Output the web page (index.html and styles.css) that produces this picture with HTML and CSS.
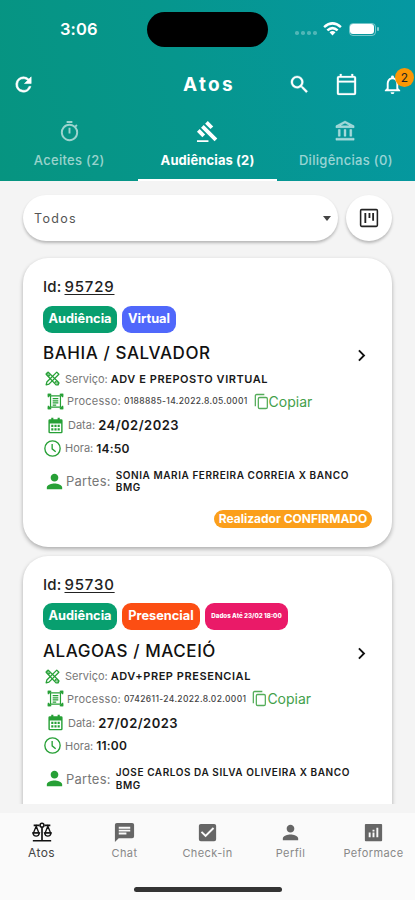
FILE: index.html
```html
<!DOCTYPE html>
<html lang="pt-BR">
<head>
<meta charset="utf-8">
<title>Atos</title>
<link rel="stylesheet" href="styles.css">
</head>
<body>
<svg class="defs" width="0" height="0">
  <symbol id="tools" viewBox="0 0 24 24"><g fill="none" stroke="currentColor" stroke-width="1.8" stroke-linejoin="round"><path d="M3 6l3-3 15 15-1 3-3 0z"/><path d="M18 3l3 3L7 20l-4 1 1-4z"/><path d="M6 9l2-2M15 18l2-2"/></g><path fill="currentColor" d="M2 5l3-3 5 5-3 3zM15 17l3-3 4 5-2 3z" opacity=".55"/></symbol>
  <symbol id="scan" viewBox="0 0 24 24"><g fill="none" stroke="currentColor" stroke-width="1.7"><path d="M2 6V2h4M18 2h4v4M22 18v4h-4M6 22H2v-4M5 4h14v16H5zM8 8h8M8 11h8M8 14h8M8 17h5"/></g><path fill="currentColor" d="M1 1h4v4H1zM19 1h4v4h-4zM1 19h4v4H1zM19 19h4v4h-4z"/></symbol>
  <symbol id="calendar" viewBox="0 0 24 24"><path fill="currentColor" fill-rule="evenodd" d="M6 1h3v2h6V1h3v2h2q2 0 2 2v16q0 2-2 2H4q-2 0-2-2V5q0-2 2-2h2zM4 9v12h16V9zM6 11h3v3H6zm4.500 0h3v3h-3zm4.500 0h3v3h-3zM6 16h3v3H6zm4.500 0h3v3h-3zm4.500 0h3v3h-3z"/></symbol>
  <symbol id="clock" viewBox="0 0 24 24"><g fill="none" stroke="currentColor" stroke-width="1.9"><circle cx="12" cy="12" r="10.800"/><path d="M11.500 5.500v7l5 4"/></g></symbol>
  <symbol id="person" viewBox="0 0 24 24"><path fill="currentColor" d="M12 12c2.200 0 4-1.800 4-4s-1.800-4-4-4-4 1.800-4 4 1.800 4 4 4zm0 2c-2.700 0-8 1.300-8 4v2h16v-2c0-2.700-5.300-4-8-4z"/></symbol>
  <symbol id="copy" viewBox="0 0 24 24"><g fill="none" stroke="currentColor" stroke-width="1.900"><rect x="8" y="6" width="13.500" height="16.500" rx="2"/><path d="M3.500 19V3.500q0-2 2-2H17"/></g></symbol>
  <symbol id="chevron" viewBox="0 0 24 24"><path fill="currentColor" d="M10 6L8.600 7.400 13.200 12l-4.600 4.600L10 18l6-6z"/></symbol>
</svg>
<div class="screen">
  <header class="header">
    <div class="status">
      <span class="time">3:06</span>
      <span class="island"></span>
      <span class="signals">
        <span class="dots"><i></i><i></i><i></i><i></i></span>
        <svg class="wifi" viewBox="0 0 20 15"><g fill="none" stroke="#fff" stroke-width="2.700"><path d="M1 5.500Q10-2.500 19 5.500"/><path d="M4.500 9Q10 4 15.500 9"/></g><path fill="#fff" d="M6.800 11Q10 8.200 13.200 11L10 14.500z"/></svg>
        <span class="battery"><i></i></span><span class="nub"></span>
      </span>
    </div>
    <div class="appbar">
      <svg class="i24 refresh" viewBox="0 0 24 24"><path fill="#fff" stroke="#fff" stroke-width=".6" d="M17.650 6.350A7.960 7.960 0 0 0 12 4a8 8 0 1 0 7.730 10h-2.080A6 6 0 1 1 12 6c1.660 0 3.140.690 4.220 1.780L13 11h7V4z"/></svg>
      <h1>Atos</h1>
      <div class="actions">
        <svg class="i24" viewBox="0 0 24 24"><path fill="#fff" stroke="#fff" stroke-width=".4" d="M15.500 14h-.790l-.280-.270A6.470 6.470 0 0 0 16 9.500 6.500 6.500 0 1 0 9.500 16c1.610 0 3.090-.590 4.230-1.570l.270.280v.790l5 4.990L20.490 19zm-6 0C7 14 5 12 5 9.500S7 5 9.500 5 14 7 14 9.500 12 14 9.500 14z"/></svg>
        <svg class="i24" viewBox="0 0 24 24"><path fill="#fff" stroke="#fff" stroke-width=".2" d="M20 3h-1V1h-2v2H7V1H5v2H4a2 2 0 0 0-2 2v16a2 2 0 0 0 2 2h16a2 2 0 0 0 2-2V5a2 2 0 0 0-2-2zm0 18H4V10h16zm0-13H4V5h16z"/></svg>
        <span class="bell"><svg class="i24" viewBox="0 0 24 24"><path fill="#fff" d="M12 22a2 2 0 0 0 2-2h-4a2 2 0 0 0 2 2zm6-6v-5c0-3.070-1.630-5.640-4.500-6.320V4a1.500 1.500 0 0 0-3 0v.680C7.640 5.360 6 7.920 6 11v5l-2 2v1h16v-1zm-2 1H8v-6c0-2.480 1.510-4.500 4-4.500s4 2.020 4 4.500z"/></svg><b class="badge">2</b></span>
      </div>
    </div>
    <nav class="tabs">
      <div class="tab">
        <svg class="i24" viewBox="0 0 24 24"><path fill="currentColor" d="M15 1H9v2h6zm-4 13h2V8h-2zm8.030-6.610l1.420-1.420c-.430-.510-.900-.990-1.410-1.410l-1.420 1.420A8.960 8.960 0 0 0 12 4a9 9 0 1 0 7.030 3.390zM12 20a7 7 0 1 1 0-14 7 7 0 0 1 0 14z"/></svg>
        <span class="t1">Aceites (2)</span>
      </div>
      <div class="tab active">
        <svg class="i24" viewBox="0 0 24 24"><path fill="currentColor" d="M1 21h12v2H1zM5.240 8.070l2.830-2.830 14.140 14.140-2.830 2.830zM12.320 1l5.660 5.660-2.830 2.830-5.660-5.660zM3.830 9.480l5.660 5.660-2.830 2.830L1 12.310z"/></svg>
        <span class="t2">Audiências (2)</span>
      </div>
      <div class="tab">
        <svg class="i24" viewBox="0 0 24 24"><path fill="currentColor" stroke="currentColor" stroke-width=".5" d="M6.500 10h-2v7h2zm6 0h-2v7h2zm8.500 9H2v2h19zm-2.500-9h-2v7h2zM11.500 3.260L16.710 6H6.290zM11.500 1L2 6v2h19V6z"/></svg>
        <span class="t3">Diligências (0)</span>
      </div>
    </nav>
  </header>
  <div class="filters">
    <div class="select"><span>Todos</span><i class="caret"></i></div>
    <div class="board"><svg viewBox="0 0 24 24"><path fill="#222" fill-rule="evenodd" d="M4 2h16q2 0 2 2v16q0 2-2 2H4q-2 0-2-2V4q0-2 2-2zm-.300 1.700v16.600h16.600V3.700zM7 6.500h2v11H7zM11.500 6.500h2V12h-2zM15.500 6.500h2V15h-2z"/></svg></div>
  </div>
  <main class="list">
    <article class="card">
      <div class="id"><span>Id:</span><u>95729</u></div>
      <div class="tags"><span class="tag green">Audiência</span><span class="tag blue">Virtual</span></div>
      <div class="title"><h2>BAHIA / SALVADOR</h2><svg class="chev"><use href="#chevron"/></svg></div>
      <div class="row service"><svg><use href="#tools"/></svg><span class="label">Serviço:</span><b>ADV E PREPOSTO VIRTUAL</b></div>
      <div class="row process"><svg><use href="#scan"/></svg><span class="label">Processo:</span><b>0188885-14.2022.8.05.0001</b><svg class="copy"><use href="#copy"/></svg><span class="copylabel">Copiar</span></div>
      <div class="row date"><svg><use href="#calendar"/></svg><span class="label">Data:</span><b>24/02/2023</b></div>
      <div class="row hour"><svg><use href="#clock"/></svg><span class="label">Hora:</span><b>14:50</b></div>
      <div class="row parties"><svg><use href="#person"/></svg><span class="label">Partes:</span><b>SONIA MARIA FERREIRA CORREIA X BANCO<br>BMG</b></div>
      <div class="foot"><span class="confirmed">Realizador CONFIRMADO</span></div>
    </article>
    <article class="card">
      <div class="id"><span>Id:</span><u>95730</u></div>
      <div class="tags"><span class="tag green">Audiência</span><span class="tag orange">Presencial</span><span class="tag pink">Dados Até 23/02 18:00</span></div>
      <div class="title"><h2>ALAGOAS / MACEIÓ</h2><svg class="chev"><use href="#chevron"/></svg></div>
      <div class="row service"><svg><use href="#tools"/></svg><span class="label">Serviço:</span><b>ADV+PREP PRESENCIAL</b></div>
      <div class="row process"><svg><use href="#scan"/></svg><span class="label">Processo:</span><b>0742611-24.2022.8.02.0001</b><svg class="copy"><use href="#copy"/></svg><span class="copylabel">Copiar</span></div>
      <div class="row date"><svg><use href="#calendar"/></svg><span class="label">Data:</span><b>27/02/2023</b></div>
      <div class="row hour"><svg><use href="#clock"/></svg><span class="label">Hora:</span><b>11:00</b></div>
      <div class="row parties"><svg><use href="#person"/></svg><span class="label">Partes:</span><b>JOSE CARLOS DA SILVA OLIVEIRA X BANCO<br>BMG</b></div>
    </article>
  </main>
  <footer class="bottom">
    <nav class="menu">
      <div class="item on"><svg viewBox="0 0 24 24"><g fill="none" stroke="currentColor"><path stroke-width="2" d="M12 6v16M1 22.500h22M2 4h7M15 4h7"/><circle cx="12" cy="3.800" r="2.300" stroke-width="1.800"/><path stroke-width="1.600" d="M5 5l-3.200 8h6.400zM19 5l-3.200 8h6.400z"/><path stroke-width="1.600" d="M1 13h8q-1 4-4 4T1 13zM15 13h8q-1 4-4 4T15 13z"/></g></svg><span>Atos</span></div>
      <div class="item"><svg viewBox="0 0 24 24"><path fill="currentColor" d="M20 2H4a2 2 0 0 0-2 2v18l4-4h14a2 2 0 0 0 2-2V4a2 2 0 0 0-2-2zM6 9h12v2H6zm8 5H6v-2h8zm4-6H6V6h12z"/></svg><span>Chat</span></div>
      <div class="item"><svg viewBox="0 0 24 24"><path fill="currentColor" d="M19 3H5a2 2 0 0 0-2 2v14a2 2 0 0 0 2 2h14a2 2 0 0 0 2-2V5a2 2 0 0 0-2-2zm-9 14l-5-5 1.410-1.410L10 14.170l7.590-7.590L19 8z"/></svg><span>Check-in</span></div>
      <div class="item"><svg viewBox="0 0 24 24"><use href="#person"/></svg><span>Perfil</span></div>
      <div class="item"><svg viewBox="0 0 24 24"><path fill="currentColor" d="M20 3H4a1 1 0 0 0-1 1v16a1 1 0 0 0 1 1h16a1 1 0 0 0 1-1V4a1 1 0 0 0-1-1zM9 17H7v-5h2zm4 0h-2v-5h2zm0-6h-2V9h2zm4 6h-2V7h2z"/></svg><span>Peformace</span></div>
    </nav>
    <div class="home"></div>
  </footer>
</div>
</body>
</html>
```
FILE: styles.css
```css
* { box-sizing: border-box; }
body { margin: 0; font-family: Inter, "Liberation Sans", sans-serif; background: #f4f4f4; }
h1, h2 { margin: 0; }
svg { display: block; flex: none; }
.defs { position: absolute; }
.screen { width: 415px; height: 900px; display: flex; flex-direction: column; overflow: hidden; white-space: nowrap; }

.header { height: 181px; flex: none; color: #fff; background: linear-gradient(75deg, #069480 0%, #06968d 45%, #0598a2 100%); }
.status { height: 58px; display: grid; grid-template-columns: 147px 121px 147px; align-items: center; }
.time { padding-left: 60px; font-size: 16.500px; font-weight: 600; letter-spacing: .1px; }
.island { height: 35px; border-radius: 18px; background: #000; }
.signals { display: flex; align-items: center; padding-left: 27px; }
.dots { display: flex; gap: 2.500px; padding-top: 8px; }
.dots i { width: 3.500px; height: 3.500px; border-radius: 50%; background: #fff; opacity: .3; }
.wifi { width: 19px; height: 14px; margin-left: 6px; }
.battery { width: 27px; height: 13px; margin-left: 7px; padding: .5px; border: 1px solid rgba(255,255,255,.45); border-radius: 4px; }
.battery i { display: block; width: 24px; height: 100%; border-radius: 3px; background: #fff; }
.nub { width: 2px; height: 4px; margin-left: 1px; background: rgba(255,255,255,.5); border-radius: 1px; }
.appbar { height: 52px; display: grid; grid-template-columns: 147px 121px 147px; align-items: center; }
.i24 { width: 23px; height: 23px; }
.refresh { margin-left: 12px; }
h1 { font-size: 19px; font-weight: 700; text-align: center; letter-spacing: 2.300px; padding-left: 3px; }
.actions { display: flex; gap: 23.500px; padding-left: 20px; }
.bell { position: relative; }
.badge { position: absolute; left: 14px; top: -5px; width: 19px; height: 19px; border-radius: 50%; background: #fb9705; color: #222; font-size: 12px; line-height: 19px; text-align: center; font-weight: 400; }
.tabs { height: 71px; display: grid; grid-template-columns: 1fr 1fr 1fr; font-size: 13px; font-weight: 500; }
.tab { display: flex; flex-direction: column; align-items: center; gap: 8px; padding-top: 10px; color: rgba(255,255,255,.6); }
.tab.active { color: #fff; font-weight: 700; border-bottom: 2.500px solid #fff; }
.tab span { line-height: 18px; }
.t1 { letter-spacing: .3px; }
.t2 { letter-spacing: .1px; }
.t3 { letter-spacing: .3px; }

.filters { padding: 14px 22px 0 23px; display: flex; gap: 8px; flex: none; }
.select { width: 315px; height: 46px; border-radius: 23px; background: #fff; box-shadow: 0 2px 3px rgba(0,0,0,.25); display: flex; align-items: center; justify-content: space-between; padding: 0 7px 0 11px; font-size: 12.500px; letter-spacing: 1.300px; color: #555; }
.caret { border: 4.500px solid transparent; border-top: 5px solid #444; border-bottom: 0; }
.board { width: 46px; height: 46px; border-radius: 50%; background: #fff; box-shadow: 0 2px 3px rgba(0,0,0,.25); display: grid; place-items: center; }
.board svg { width: 22px; height: 22px; }

.list { height: 563px; flex: none; padding: 17px 23px 0; overflow: hidden; }
.card { height: 289px; margin-bottom: 8.500px; padding: 18px 20px 0; border-radius: 25px; background: #fff; box-shadow: 0 2px 4px rgba(0,0,0,.3); }
.id { height: 22px; line-height: 22px; display: flex; font-size: 15px; font-weight: 500; color: #222; }
.id span { width: 21.500px; letter-spacing: .2px; }
.id u { text-underline-offset: 2px; text-decoration-thickness: 1px; letter-spacing: .8px; }
.tags { margin-top: 7.500px; display: flex; gap: 5px; }
.tag { height: 27px; line-height: 26px; border-radius: 9px; color: #fff; font-size: 12.800px; font-weight: 700; text-align: center; }
.green { width: 74px; background: #089f6f; }
.blue { width: 54px; background: #5068fb; }
.orange { width: 78px; background: #fc4e13; }
.pink { width: 83px; background: #ea1a68; font-size: 6.200px; font-weight: 800; }
.title { height: 24px; margin-top: 8.500px; display: flex; align-items: center; justify-content: space-between; }
h2 { font-size: 17px; font-weight: 500; color: #111; letter-spacing: .570px; }
.chev { width: 23px; height: 23px; color: #111; margin: 5px -1px 0 0; }
.row { display: flex; align-items: center; color: #191919; font-size: 11px; }
.row svg { color: #27a036; width: 17px; height: 17px; }
.row .label { color: #777; margin: 0 3px 0 4px; }
.row b { font-weight: 600; }
.service { height: 22px; margin-top: 2.500px; padding-left: 1px; }
.service b { letter-spacing: .560px; }
.process { height: 23px; padding-left: 4px; }
.process .label { letter-spacing: .250px; margin: 0 3px; }
.process b { font-size: 8.500px; font-weight: 500; color: #444; letter-spacing: .350px; }
.process .copy { width: 16px; height: 17px; margin-left: 5px; color: #55ad5a; }
.copylabel { font-size: 14px; color: #43a04a; }
.date { height: 24px; padding-left: 4px; margin-top: .5px; }
.date b { font-size: 13px; letter-spacing: .480px; }
.hour { height: 22px; padding-left: 1px; }
.hour b { font-size: 12px; letter-spacing: .200px; }
.parties { height: 32px; margin-top: 6px; }
.parties svg { width: 23px; height: 23px; }
.parties .label { font-size: 13px; margin: 0 5px 0 0; letter-spacing: .250px; }
.parties b { font-size: 10px; line-height: 12.500px; letter-spacing: .560px; }
.foot { display: flex; justify-content: flex-end; margin-top: 13px; }
.confirmed { width: 158px; height: 18px; line-height: 18px; border-radius: 9px; background: #fb9f1b; color: #fff; font-size: 12px; font-weight: 700; text-align: center; }

.bottom { margin-top: 9px; height: 87px; flex: none; background: #fafafa; }
.menu { height: 74px; display: grid; grid-template-columns: repeat(5, 1fr); }
.item { display: flex; flex-direction: column; align-items: center; color: #666; font-size: 11px; padding-top: 8px; gap: 2px; }
.item svg { width: 23px; height: 23px; }
.item span { line-height: 15px; color: #888; letter-spacing: .4px; }
.item.on { color: #111; font-size: 12px; }
.item.on svg { width: 20px; height: 20px; margin: 1px 0 1px; }
.item.on span { color: #444; }
.home { width: 148px; height: 5px; margin: 0 auto; border-radius: 3px; background: #333; }
```
